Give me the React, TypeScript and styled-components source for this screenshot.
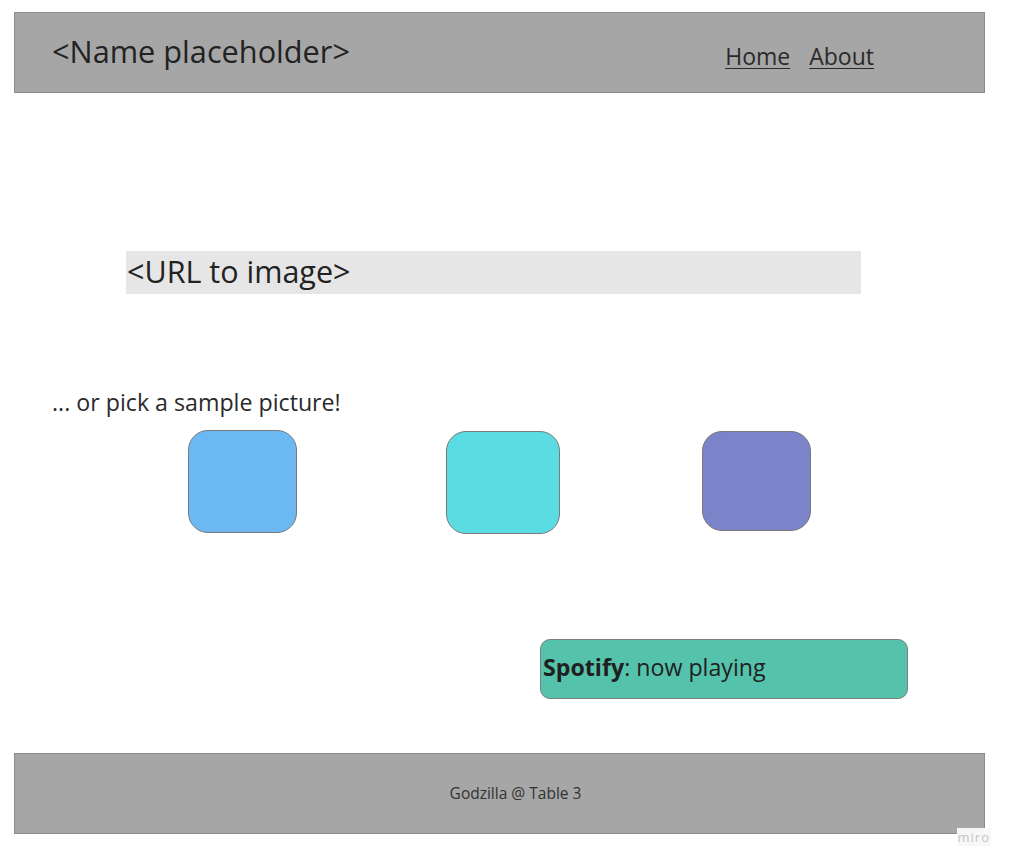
import React from 'react';
import styled, { createGlobalStyle } from 'styled-components';

const GlobalStyle = createGlobalStyle`
  html, body {
    margin: 0;
    padding: 0;
    background: #ffffff;
    font-family: "Open Sans", "Noto Sans", sans-serif;
    color: #222222;
  }
`;

const Page = styled.div`
  position: relative;
  width: 1014px;
  height: 866px;
  padding: 12px 0 0 14px;
  box-sizing: border-box;
`;

const Bar = styled.div`
  width: 971px;
  height: 81px;
  box-sizing: border-box;
  background: #a6a6a6;
  border: 1px solid #8c8c8c;
  display: flex;
  align-items: center;
`;

const Header = styled(Bar)`
  padding-left: 37px;
`;

const Title = styled.h1`
  margin: 0 0 4px;
  font-size: 30.7px;
  font-weight: 400;
  color: #222;
`;

const Nav = styled.nav`
  margin-left: auto;
  margin-right: 110px;
  padding-top: 6px;
  display: flex;
  gap: 19px;
`;

const NavLink = styled.a`
  font-size: 23px;
  color: #2a2a2a;
  text-decoration: underline;
  text-underline-offset: 3px;
  text-decoration-thickness: 1px;
`;

const UrlBar = styled.div`
  margin: 158px 0 0 112px;
  width: 735px;
  height: 43px;
  background: #e6e6e6;
  display: flex;
  align-items: center;
  font-size: 30.5px;
  line-height: 40px;
  color: #222;
  padding: 0 0 3px 1px;
  box-sizing: border-box;
`;

const PickText = styled.p`
  margin: 93px 0 0 38px;
  font-size: 23.2px;
  line-height: 30px;
  color: #2a2a2a;
`;

const Swatches = styled.div`
  display: flex;
  align-items: flex-start;
  margin-top: 13px;
  height: 104px;
`;

const Swatch = styled.div<{ $color: string; $w: number; $h: number; $left: number; $top: number }>`
  width: ${p => p.$w}px;
  height: ${p => p.$h}px;
  margin-left: ${p => p.$left}px;
  margin-top: ${p => p.$top}px;
  box-sizing: border-box;
  background: ${p => p.$color};
  border: 1px solid #7a7a7a;
  border-radius: 20px;
`;

const NowPlaying = styled.div`
  margin: 105px 0 0 526px;
  width: 368px;
  height: 60px;
  box-sizing: border-box;
  background: #55c2ab;
  border: 1px solid #7f7f7f;
  border-radius: 10px;
  display: flex;
  align-items: center;
  padding: 0 0 5px 2px;
  font-size: 23.2px;
  color: #1f1f1f;

  b {
    font-weight: 700;
  }
`;

const Footer = styled(Bar)`
  margin-top: 54px;
  justify-content: center;
  padding: 0 0 2px 32px;
  font-size: 15.5px;
  color: #333;
`;

const Watermark = styled.div`
  position: absolute;
  right: 23px;
  bottom: 20px;
  padding: 0 1px;
  background: #f7f7f7;
  font-size: 13px;
  letter-spacing: 1px;
  color: #c4c4c4;
`;

export default function App() {
  return (
    <>
      <GlobalStyle />
      <Page>
        <Header>
          <Title>&lt;Name placeholder&gt;</Title>
          <Nav>
            <NavLink>Home</NavLink>
            <NavLink>About</NavLink>
          </Nav>
        </Header>
        <UrlBar>&lt;URL to image&gt;</UrlBar>
        <PickText>... or pick a sample picture!</PickText>
        <Swatches>
          <Swatch $color="#6cb8f3" $w={109} $h={103} $left={174} $top={0} />
          <Swatch $color="#5adce2" $w={114} $h={103} $left={149} $top={1} />
          <Swatch $color="#7b83c9" $w={109} $h={100} $left={142} $top={1} />
        </Swatches>
        <NowPlaying>
          <b>Spotify</b>: now playing
        </NowPlaying>
        <Footer>Godzilla @ Table 3</Footer>
        <Watermark>miro</Watermark>
      </Page>
    </>
  );
}
